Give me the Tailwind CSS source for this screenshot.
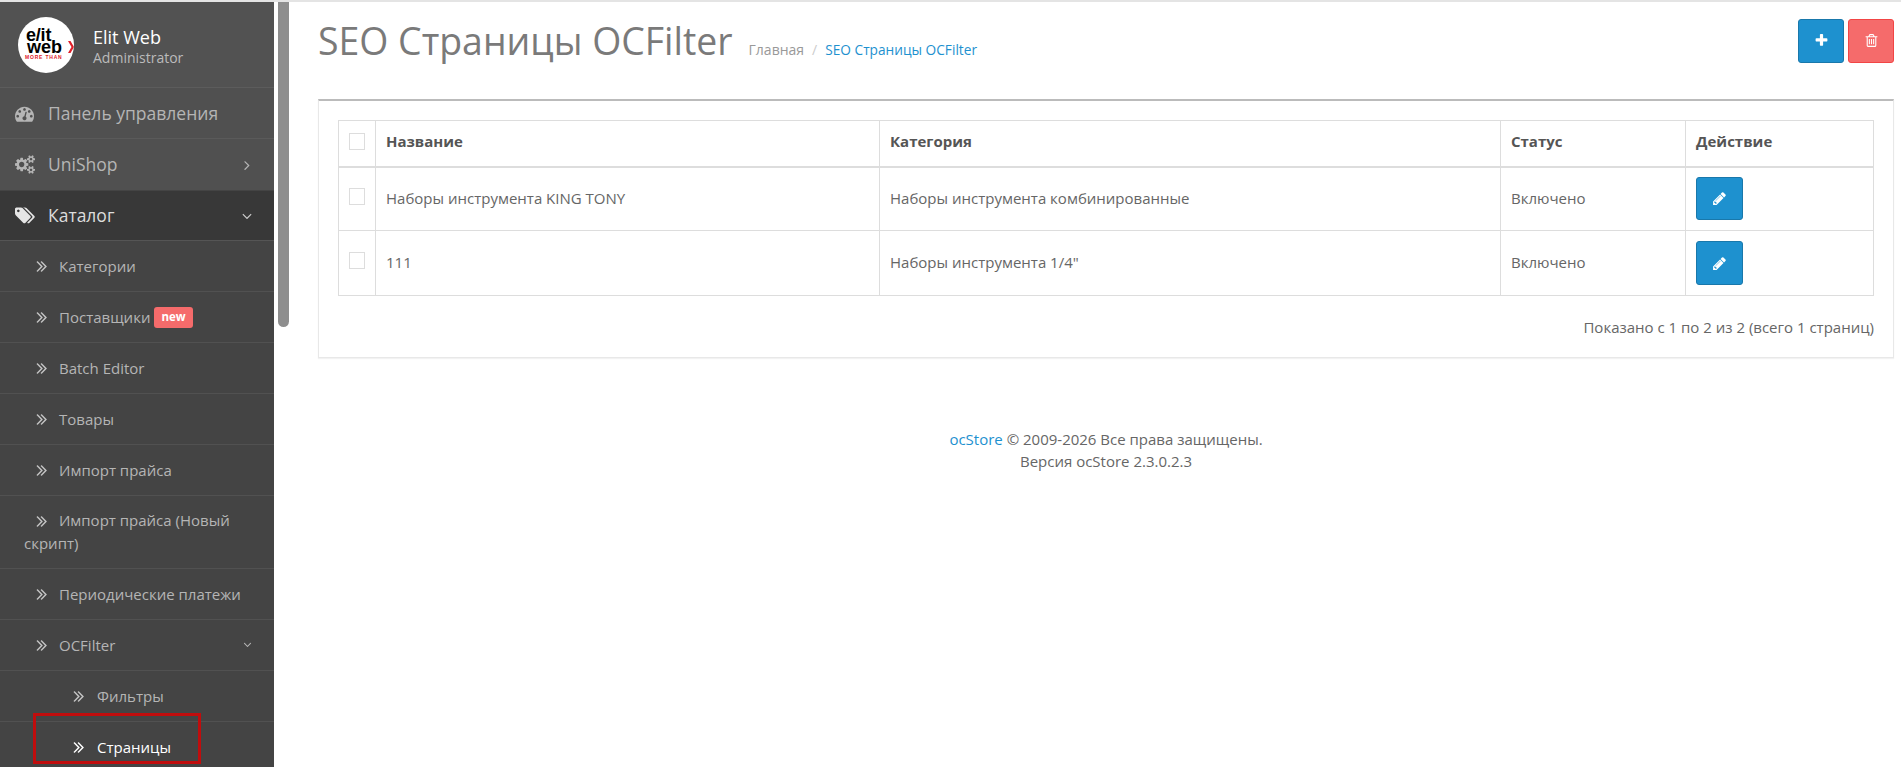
<!DOCTYPE html>
<html lang="ru">
<head>
    <meta charset="UTF-8">
    <title>SEO Страницы OCFilter</title>
    <script src="https://cdn.jsdelivr.net/npm/@tailwindcss/browser@4"></script>
</head>
<body class="bg-white font-['Open_Sans',sans-serif] text-[15px] text-[#666] h-[767px] overflow-hidden">
<div class="flex h-[767px] border-t-2 border-[#e4e4e4]">

    <!-- Сайдбар -->
    <aside class="relative w-[274px] h-[765px] shrink-0 overflow-hidden bg-[#444] text-[#b5b5b5]">
        <div class="flex items-center h-[86px] pl-[18px] bg-[#525252] border-b border-[#5c5c5c]">
            <div class="relative w-[56px] h-[56px] rounded-full bg-white overflow-hidden shrink-0 font-['Liberation_Sans',sans-serif] font-bold text-black">
                <div class="absolute left-[8px] top-[12px] text-[18px] leading-[13px] tracking-[-0.2px]">e/it</div>
                <div class="absolute left-[9px] top-[24px] text-[18px] leading-[13px]">web</div>
                <div class="absolute left-[7px] top-[38px] text-[5px] leading-[5px] tracking-[0.8px] text-[#e0202a] whitespace-nowrap">MORE THAN</div>
                <svg class="absolute left-[50px] top-[24px]" width="6" height="12" viewBox="0 0 6 12"><path d="M0 0h2.5l3.5 6-3.5 6h-2.5l3.5-6z" fill="#e0202a"/></svg>
            </div>
            <div class="ml-[19px] mt-[3px]">
                <div class="text-[18px] leading-[22px] text-white">Elit Web</div>
                <div class="text-[14px] leading-[19px] text-[#bbb]">Administrator</div>
            </div>
        </div>

        <a class="flex items-center h-[51px] pl-[15px] text-[17.5px] bg-[#505050] border-b border-[#5a5a5a]">
            <svg class="w-[19px] h-[19px] fill-[#b5b5b5]" viewBox="0 0 1792 1792"><path d="M384 1152q0-53-37.5-90.5t-90.5-37.5-90.5 37.5-37.5 90.5 37.5 90.5 90.5 37.5 90.5-37.5 37.5-90.5zm192-448q0-53-37.5-90.5t-90.5-37.5-90.5 37.5-37.5 90.5 37.5 90.5 90.5 37.5 90.5-37.5 37.5-90.5zm428 481l101-382q6-26-7.5-48.5t-38.5-29.5-48 6.5-30 39.5l-101 382q-60 5-107 43.5t-63 98.5q-20 77 20 146t117 89 146-20 89-117q16-60-6-117t-72-91zm660-33q0-53-37.5-90.5t-90.5-37.5-90.5 37.5-37.5 90.5 37.5 90.5 90.5 37.5 90.5-37.5 37.5-90.5zm-640-640q0-53-37.5-90.5t-90.5-37.5-90.5 37.5-37.5 90.5 37.5 90.5 90.5 37.5 90.5-37.5 37.5-90.5zm448 192q0-53-37.5-90.5t-90.5-37.5-90.5 37.5-37.5 90.5 37.5 90.5 90.5 37.5 90.5-37.5 37.5-90.5zm320 448q0 261-141 483-19 29-54 29h-1402q-35 0-54-29-141-221-141-483 0-182 71-348t191-286 286-191 348-71 348 71 286 191 191 286 71 348z"/></svg>
            <span class="ml-[14px]">Панель управления</span>
        </a>
        <a class="flex items-center h-[52px] pl-[15px] text-[17.5px] bg-[#505050] border-b border-[#444]">
            <svg class="w-[20px] h-[19px] fill-[#b5b5b5]" viewBox="0 0 1920 1792"><path d="M896 896q0-106-75-181t-181-75-181 75-75 181 75 181 181 75 181-75 75-181zm768 512q0-52-38-90t-90-38-90 38-38 90q0 53 37.5 90.5t90.5 37.5 90.5-37.5 37.5-90.5zm0-1024q0-52-38-90t-90-38-90 38-38 90q0 53 37.5 90.5t90.5 37.5 90.5-37.5 37.5-90.5zm-384 421v185q0 10-7 19.5t-16 10.5l-155 24q-11 35-32 76 34 48 90 115 7 11 7 20 0 12-7 19-23 30-82.5 89.5t-78.5 59.5q-11 0-21-7l-115-90q-37 19-77 31-11 108-23 155-7 24-30 24h-186q-11 0-20-7.5t-10-17.5l-23-153q-34-10-75-31l-118 89q-7 7-20 7-11 0-21-8-144-133-144-160 0-9 7-19 10-14 41-53t47-61q-23-44-35-82l-152-24q-10-1-17-9.5t-7-19.5v-185q0-10 7-19.5t16-10.5l155-24q11-35 32-76-34-48-90-115-7-11-7-20 0-12 7-20 22-30 82-89t79-59q11 0 21 7l115 90q34-18 77-32 11-108 23-154 7-24 30-24h186q11 0 20 7.5t10 17.5l23 153q34 10 75 31l118-89q8-7 20-7 11 0 21 8 144 133 144 160 0 8-7 19-12 16-42 54t-45 60q23 48 34 82l152 23q10 2 17 10.5t7 19.5zm640 533v140q0 16-149 31-12 27-30 52 51 113 51 138 0 4-4 7-122 71-124 71-8 0-46-47t-52-68q-20 2-30 2t-30-2q-14 21-52 68t-46 47q-2 0-124-71-4-3-4-7 0-25 51-138-18-25-30-52-149-15-149-31v-140q0-16 149-31 13-29 30-52-51-113-51-138 0-4 4-7 4-2 35-20t59-34 30-16q8 0 46 46.5t52 67.5q20-2 30-2t30 2q51-71 92-112l6-2q4 0 124 70 4 3 4 7 0 25-51 138 17 23 30 52 149 15 149 31zm0-1024v140q0 16-149 31-12 27-30 52 51 113 51 138 0 4-4 7-122 71-124 71-8 0-46-47t-52-68q-20 2-30 2t-30-2q-14 21-52 68t-46 47q-2 0-124-71-4-3-4-7 0-25 51-138-18-25-30-52-149-15-149-31v-140q0-16 149-31 13-29 30-52-51-113-51-138 0-4 4-7 4-2 35-20t59-34 30-16q8 0 46 46.5t52 67.5q20-2 30-2t30 2q51-71 92-112l6-2q4 0 124 70 4 3 4 7 0 25-51 138 17 23 30 52 149 15 149 31z"/></svg>
            <span class="ml-[13px]">UniShop</span>
            <svg class="w-[16px] h-[16px] ml-auto mr-[19px] fill-[#b5b5b5]" viewBox="0 0 1792 1792"><path d="M1171 960q0 13-10 23l-466 466q-10 10-23 10t-23-10l-50-50q-10-10-10-23t10-23l393-393-393-393q-10-10-10-23t10-23l50-50q10-10 23-10t23 10l466 466q10 10 10 23z"/></svg>
        </a>
        <a class="flex items-center h-[50px] pl-[15px] text-[17.5px] text-[#ddd] bg-[#383838] border-b border-[#555]">
            <svg class="w-[20px] h-[19px] fill-[#e6e6e6]" viewBox="0 0 1920 1792"><path d="M448 448q0-53-37.5-90.5t-90.5-37.5-90.5 37.5-37.5 90.5 37.5 90.5 90.5 37.5 90.5-37.5 37.5-90.5zm1067 576q0 53-37 90l-491 492q-39 37-91 37-53 0-90-37l-715-716q-38-37-64.5-101t-26.5-117v-416q0-52 38-90t90-38h416q53 0 117 26.5t102 64.5l715 714q37 39 37 91zm384 0q0 53-37 90l-491 492q-39 37-91 37-36 0-59-14t-53-45l470-470q37-37 37-90 0-52-37-91l-715-714q-38-38-102-64.5t-117-26.5h224q53 0 117 26.5t102 64.5l715 714q37 39 37 91z"/></svg>
            <span class="ml-[13px]">Каталог</span>
            <svg class="w-[16px] h-[16px] ml-auto mr-[19px] fill-[#ccc]" viewBox="0 0 1792 1792"><path d="M1395 736q0 13-10 23l-466 466q-10 10-23 10t-23-10l-466-466q-10-10-10-23t10-23l50-50q10-10 23-10t23 10l393 393 393-393q10-10 23-10t23 10l50 50q10 10 10 23z"/></svg>
        </a>

        <!-- Подменю каталога -->
        <a class="flex items-center h-[51px] pl-[36px] border-b border-[#515151]">
            <svg class="w-[11px] h-[11px] fill-[#c4c4c4]" viewBox="340 460 1040 1000"><path d="M979 960q0 13-10 23l-466 466q-10 10-23 10t-23-10l-50-50q-10-10-10-23t10-23l393-393-393-393q-10-10-10-23t10-23l50-50q10-10 23-10t23 10l466 466q10 10 10 23zm384 0q0 13-10 23l-466 466q-10 10-23 10t-23-10l-50-50q-10-10-10-23t10-23l393-393-393-393q-10-10-10-23t10-23l50-50q10-10 23-10t23 10l466 466q10 10 10 23z"/></svg>
            <span class="ml-[12px]">Категории</span>
        </a>
        <a class="flex items-center h-[51px] pl-[36px] border-b border-[#515151]">
            <svg class="w-[11px] h-[11px] fill-[#c4c4c4]" viewBox="340 460 1040 1000"><path d="M979 960q0 13-10 23l-466 466q-10 10-23 10t-23-10l-50-50q-10-10-10-23t10-23l393-393-393-393q-10-10-10-23t10-23l50-50q10-10 23-10t23 10l466 466q10 10 10 23zm384 0q0 13-10 23l-466 466q-10 10-23 10t-23-10l-50-50q-10-10-10-23t10-23l393-393-393-393q-10-10-10-23t10-23l50-50q10-10 23-10t23 10l466 466q10 10 10 23z"/></svg>
            <span class="ml-[12px]">Поставщики</span>
            <span class="ml-[4px] px-[7px] h-[21px] leading-[20px] rounded-[3px] bg-[#f56b6b] text-white text-[11.5px] font-bold">new</span>
        </a>
        <a class="flex items-center h-[51px] pl-[36px] border-b border-[#515151]">
            <svg class="w-[11px] h-[11px] fill-[#c4c4c4]" viewBox="340 460 1040 1000"><path d="M979 960q0 13-10 23l-466 466q-10 10-23 10t-23-10l-50-50q-10-10-10-23t10-23l393-393-393-393q-10-10-10-23t10-23l50-50q10-10 23-10t23 10l466 466q10 10 10 23zm384 0q0 13-10 23l-466 466q-10 10-23 10t-23-10l-50-50q-10-10-10-23t10-23l393-393-393-393q-10-10-10-23t10-23l50-50q10-10 23-10t23 10l466 466q10 10 10 23z"/></svg>
            <span class="ml-[12px]">Batch Editor</span>
        </a>
        <a class="flex items-center h-[51px] pl-[36px] border-b border-[#515151]">
            <svg class="w-[11px] h-[11px] fill-[#c4c4c4]" viewBox="340 460 1040 1000"><path d="M979 960q0 13-10 23l-466 466q-10 10-23 10t-23-10l-50-50q-10-10-10-23t10-23l393-393-393-393q-10-10-10-23t10-23l50-50q10-10 23-10t23 10l466 466q10 10 10 23zm384 0q0 13-10 23l-466 466q-10 10-23 10t-23-10l-50-50q-10-10-10-23t10-23l393-393-393-393q-10-10-10-23t10-23l50-50q10-10 23-10t23 10l466 466q10 10 10 23z"/></svg>
            <span class="ml-[12px]">Товары</span>
        </a>
        <a class="flex items-center h-[51px] pl-[36px] border-b border-[#515151]">
            <svg class="w-[11px] h-[11px] fill-[#c4c4c4]" viewBox="340 460 1040 1000"><path d="M979 960q0 13-10 23l-466 466q-10 10-23 10t-23-10l-50-50q-10-10-10-23t10-23l393-393-393-393q-10-10-10-23t10-23l50-50q10-10 23-10t23 10l466 466q10 10 10 23zm384 0q0 13-10 23l-466 466q-10 10-23 10t-23-10l-50-50q-10-10-10-23t10-23l393-393-393-393q-10-10-10-23t10-23l50-50q10-10 23-10t23 10l466 466q10 10 10 23z"/></svg>
            <span class="ml-[12px]">Импорт прайса</span>
        </a>
        <a class="block h-[73px] pl-[24px] pr-[10px] pt-[13px] leading-[23px] border-b border-[#515151]">
            <svg class="inline-block align-[-1px] ml-[12px] w-[11px] h-[11px] fill-[#c4c4c4]" viewBox="340 460 1040 1000"><path d="M979 960q0 13-10 23l-466 466q-10 10-23 10t-23-10l-50-50q-10-10-10-23t10-23l393-393-393-393q-10-10-10-23t10-23l50-50q10-10 23-10t23 10l466 466q10 10 10 23zm384 0q0 13-10 23l-466 466q-10 10-23 10t-23-10l-50-50q-10-10-10-23t10-23l393-393-393-393q-10-10-10-23t10-23l50-50q10-10 23-10t23 10l466 466q10 10 10 23z"/></svg>
            <span class="ml-[8px]">Импорт прайса (Новый скрипт)</span>
        </a>
        <a class="flex items-center h-[51px] pl-[36px] border-b border-[#515151]">
            <svg class="w-[11px] h-[11px] fill-[#c4c4c4]" viewBox="340 460 1040 1000"><path d="M979 960q0 13-10 23l-466 466q-10 10-23 10t-23-10l-50-50q-10-10-10-23t10-23l393-393-393-393q-10-10-10-23t10-23l50-50q10-10 23-10t23 10l466 466q10 10 10 23zm384 0q0 13-10 23l-466 466q-10 10-23 10t-23-10l-50-50q-10-10-10-23t10-23l393-393-393-393q-10-10-10-23t10-23l50-50q10-10 23-10t23 10l466 466q10 10 10 23z"/></svg>
            <span class="ml-[12px]">Периодические платежи</span>
        </a>
        <a class="flex items-center h-[51px] pl-[36px] border-b border-[#515151]">
            <svg class="w-[11px] h-[11px] fill-[#c4c4c4]" viewBox="340 460 1040 1000"><path d="M979 960q0 13-10 23l-466 466q-10 10-23 10t-23-10l-50-50q-10-10-10-23t10-23l393-393-393-393q-10-10-10-23t10-23l50-50q10-10 23-10t23 10l466 466q10 10 10 23zm384 0q0 13-10 23l-466 466q-10 10-23 10t-23-10l-50-50q-10-10-10-23t10-23l393-393-393-393q-10-10-10-23t10-23l50-50q10-10 23-10t23 10l466 466q10 10 10 23z"/></svg>
            <span class="ml-[12px]">OCFilter</span>
            <svg class="w-[13px] h-[13px] ml-auto mr-[20px] mb-[2px] fill-[#b5b5b5]" viewBox="0 0 1792 1792"><path d="M1395 736q0 13-10 23l-466 466q-10 10-23 10t-23-10l-466-466q-10-10-10-23t10-23l50-50q10-10 23-10t23 10l393 393 393-393q10-10 23-10t23 10l50 50q10 10 10 23z"/></svg>
        </a>
        <a class="flex items-center h-[51px] pl-[73px] border-b border-[#515151]">
            <svg class="w-[11px] h-[11px] fill-[#c4c4c4]" viewBox="340 460 1040 1000"><path d="M979 960q0 13-10 23l-466 466q-10 10-23 10t-23-10l-50-50q-10-10-10-23t10-23l393-393-393-393q-10-10-10-23t10-23l50-50q10-10 23-10t23 10l466 466q10 10 10 23zm384 0q0 13-10 23l-466 466q-10 10-23 10t-23-10l-50-50q-10-10-10-23t10-23l393-393-393-393q-10-10-10-23t10-23l50-50q10-10 23-10t23 10l466 466q10 10 10 23z"/></svg>
            <span class="ml-[13px]">Фильтры</span>
        </a>
        <a class="flex items-center h-[51px] pl-[73px] text-white">
            <svg class="w-[11px] h-[11px] fill-white" viewBox="340 460 1040 1000"><path d="M979 960q0 13-10 23l-466 466q-10 10-23 10t-23-10l-50-50q-10-10-10-23t10-23l393-393-393-393q-10-10-10-23t10-23l50-50q10-10 23-10t23 10l466 466q10 10 10 23zm384 0q0 13-10 23l-466 466q-10 10-23 10t-23-10l-50-50q-10-10-10-23t10-23l393-393-393-393q-10-10-10-23t10-23l50-50q10-10 23-10t23 10l466 466q10 10 10 23z"/></svg>
            <span class="ml-[13px]">Страницы</span>
        </a>

        <!-- Красная рамка поверх пункта -->
        <div class="absolute left-[33px] top-[711px] w-[168px] h-[51px] border-[3px] border-[#c00d0d]"></div>
    </aside>

    <!-- Ползунок прокрутки -->
    <div class="ml-[4px] w-[11px] h-[325px] shrink-0 bg-[#8e8e8e] rounded-b-[6px]"></div>

    <!-- Контент -->
    <main class="flex-1 pl-[29px] pr-[7px]">
        <div class="flex items-center h-[97px] pb-[15px]">
            <h1 class="text-[37.4px] leading-[50px] text-[#7a7a7a] mb-[4px]">SEO Страницы OCFilter</h1>
            <div class="ml-[16px] mt-[13px] text-[14px] text-[#999]">Главная<span class="mx-[8px] text-[#ccc]">/</span><a class="text-[13.7px] text-[#1e91cf]">SEO Страницы OCFilter</a></div>
            <div class="ml-auto mb-[5px] flex gap-[4px]">
                <button class="flex items-center justify-center w-[46px] h-[44px] rounded-[3px] bg-[#1e91cf] border border-[#1978ab]">
                    <svg class="w-[15px] h-[15px] fill-white" viewBox="0 0 1792 1792"><path d="M1600 736v192q0 40-28 68t-68 28h-416v416q0 40-28 68t-68 28h-192q-40 0-68-28t-28-68v-416h-416q-40 0-68-28t-28-68v-192q0-40 28-68t68-28h416v-416q0-40 28-68t68-28h192q40 0 68 28t28 68v416h416q40 0 68 28t28 68z"/></svg>
                </button>
                <button class="flex items-center justify-center w-[46px] h-[44px] rounded-[3px] bg-[#f56b6b] border border-[#f24545]">
                    <svg class="w-[15px] h-[15px] fill-white" viewBox="0 0 1792 1792"><path d="M704 736v576q0 14-9 23t-23 9h-64q-14 0-23-9t-9-23v-576q0-14 9-23t23-9h64q14 0 23 9t9 23zm256 0v576q0 14-9 23t-23 9h-64q-14 0-23-9t-9-23v-576q0-14 9-23t23-9h64q14 0 23 9t9 23zm256 0v576q0 14-9 23t-23 9h-64q-14 0-23-9t-9-23v-576q0-14 9-23t23-9h64q14 0 23 9t9 23zm128 724v-948h-896v948q0 22 7 40.5t14.5 27 10.5 8.5h832q3 0 10.5-8.5t14.5-27 7-40.5zm-672-1076h448l-48-117q-7-9-17-11h-317q-10 2-17 11zm928 32v64q0 14-9 23t-23 9h-96v948q0 83-47 143.5t-113 60.5h-832q-66 0-113-58.5t-47-141.5v-952h-96q-14 0-23-9t-9-23v-64q0-14 9-23t23-9h309l70-167q15-37 54-63t79-26h320q40 0 79 26t54 63l70 167h309q14 0 23 9t9 23z"/></svg>
                </button>
            </div>
        </div>

        <div class="h-[259px] border border-[#e8e8e8] border-t-2 border-t-[#bbb] shadow-[0_1px_1px_rgba(0,0,0,0.05)] px-[19px] pt-[19px]">
            <table class="w-full border-collapse table-fixed">
                <colgroup>
                    <col class="w-[37px]"><col class="w-[504px]"><col class="w-[621px]"><col class="w-[185px]"><col>
                </colgroup>
                <thead>
                <tr class="h-[46px] font-bold text-[#555] text-left">
                    <td class="border border-[#ddd] border-b-2 pl-[10px]"><span class="block w-[16px] h-[17px] border border-[#ddd] mb-[3px]"></span></td>
                    <td class="border border-[#ddd] border-b-2 px-[10px] pb-[4px]">Название</td>
                    <td class="border border-[#ddd] border-b-2 px-[10px] pb-[4px]">Категория</td>
                    <td class="border border-[#ddd] border-b-2 px-[10px] pb-[4px]">Статус</td>
                    <td class="border border-[#ddd] border-b-2 px-[10px] pb-[4px]">Действие</td>
                </tr>
                </thead>
                <tbody>
                <tr class="h-[64px]">
                    <td class="border border-[#ddd] pl-[10px]"><span class="block w-[16px] h-[17px] border border-[#ddd] mb-[5px]"></span></td>
                    <td class="border border-[#ddd] px-[10px] pb-[2px]">Наборы инструмента KING TONY</td>
                    <td class="border border-[#ddd] px-[10px] pb-[2px]">Наборы инструмента комбинированные</td>
                    <td class="border border-[#ddd] px-[10px] pb-[2px]">Включено</td>
                    <td class="border border-[#ddd] px-[10px]">
                        <button class="flex items-center justify-center w-[47px] h-[43px] rounded-[3px] bg-[#1e91cf] border border-[#1978ab]">
                            <svg class="w-[15px] h-[15px] fill-white" viewBox="0 0 1792 1792"><path d="M491 1536l91-91-235-235-91 91v107h128v128h107zm523-928q0-22-22-22-10 0-17 7l-542 542q-7 7-7 17 0 22 22 22 10 0 17-7l542-542q7-7 7-17zm-54-192l416 416-832 832h-416v-416zm683 96q0 53-37 90l-166 166-416-416 166-165q36-38 90-38 53 0 91 38l235 234q37 39 37 91z"/></svg>
                        </button>
                    </td>
                </tr>
                <tr class="h-[65px]">
                    <td class="border border-[#ddd] pl-[10px]"><span class="block w-[16px] h-[17px] border border-[#ddd] mb-[5px]"></span></td>
                    <td class="border border-[#ddd] px-[10px] pb-[2px]">111</td>
                    <td class="border border-[#ddd] px-[10px] pb-[2px]">Наборы инструмента 1/4"</td>
                    <td class="border border-[#ddd] px-[10px] pb-[2px]">Включено</td>
                    <td class="border border-[#ddd] px-[10px]">
                        <button class="flex items-center justify-center w-[47px] h-[44px] rounded-[3px] bg-[#1e91cf] border border-[#1978ab]">
                            <svg class="w-[15px] h-[15px] fill-white" viewBox="0 0 1792 1792"><path d="M491 1536l91-91-235-235-91 91v107h128v128h107zm523-928q0-22-22-22-10 0-17 7l-542 542q-7 7-7 17 0 22 22 22 10 0 17-7l542-542q7-7 7-17zm-54-192l416 416-832 832h-416v-416zm683 96q0 53-37 90l-166 166-416-416 166-165q36-38 90-38 53 0 91 38l235 234q37 39 37 91z"/></svg>
                        </button>
                    </td>
                </tr>
                </tbody>
            </table>
            <div class="mt-[20px] text-right">Показано с 1 по 2 из 2 (всего 1 страниц)</div>
        </div>

        <footer class="mt-[70px] text-center leading-[22px]">
            <a class="text-[#1e91cf]">ocStore</a> © 2009-2026 Все права защищены.<br>Версия ocStore 2.3.0.2.3
        </footer>
    </main>
</div>
</body>
</html>
